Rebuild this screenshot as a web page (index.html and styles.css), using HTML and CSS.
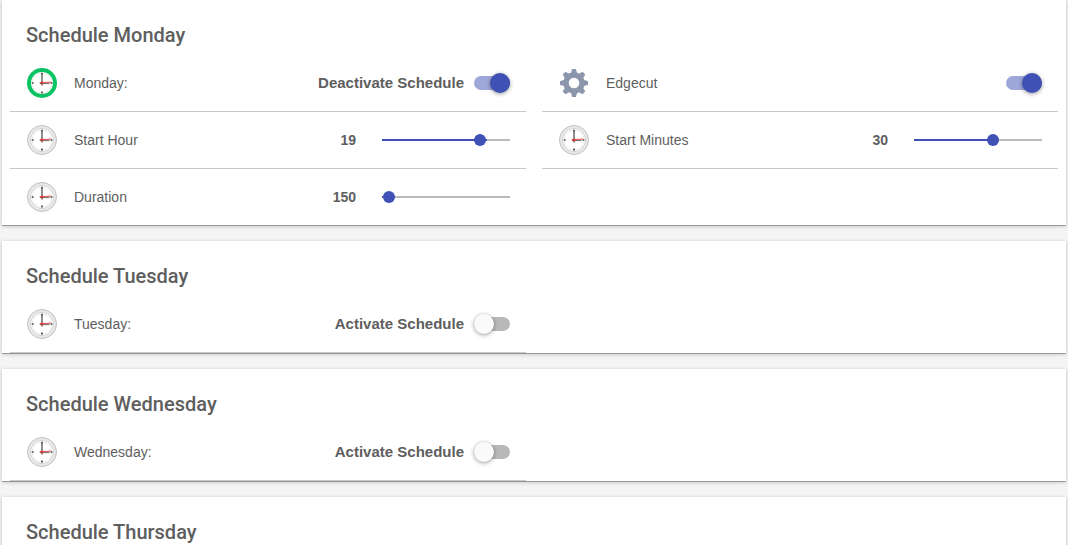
FILE: index.html
```
<!DOCTYPE html>
<html lang="en">
<head>
<meta charset="utf-8">
<title>Schedule</title>
<link rel="stylesheet" href="styles.css">
</head>
<body>
<svg class="defs" aria-hidden="true">
  <symbol id="clock-face" viewBox="0 0 32 32">
    <circle cx="16" cy="16" r="11" fill="#fff"/>
    <circle cx="16" cy="16" r="9.9" fill="none" stroke="#ccc" stroke-width="1" stroke-dasharray=".4 .637"/>
    <path d="M16 5.8v1.8M16 24.6v1.8M5.8 16h1.8M24.6 16h1.8" stroke="#444" stroke-width="1.6"/>
    <path d="M16 6.5v12" stroke="#606060" stroke-width="1.4"/>
    <path d="M14 16.4h9.5" stroke="#777" stroke-width="1.4"/>
    <path d="M13.5 15.8l11.5-.8" stroke="#ea5050" stroke-width="1"/>
    <circle cx="16" cy="16" r="1.4" fill="#d23c3c"/>
  </symbol>
  <symbol id="clock" viewBox="0 0 32 32">
    <circle cx="16" cy="16" r="14.5" fill="#e8e8e8" stroke="#c2c2c2"/>
    <circle cx="16" cy="16" r="11.3" fill="#fff" stroke="#c8c8c8" stroke-width="1"/>
    <use href="#clock-face"/>
  </symbol>
  <symbol id="clock-on" viewBox="0 0 32 32">
    <circle cx="16" cy="16" r="15" fill="#0ac463"/>
    <use href="#clock-face"/>
  </symbol>
  <symbol id="gear" viewBox="0 0 32 32">
    <g fill="#8b96ad">
      <path id="tooth" d="M12.8 7l1.1-4.5q.1-.5.6-.5h3q.5 0 .6.5l1.1 4.5z"/>
      <use href="#tooth" transform="rotate(45 16 16)"/>
      <use href="#tooth" transform="rotate(90 16 16)"/>
      <use href="#tooth" transform="rotate(135 16 16)"/>
      <use href="#tooth" transform="rotate(180 16 16)"/>
      <use href="#tooth" transform="rotate(225 16 16)"/>
      <use href="#tooth" transform="rotate(270 16 16)"/>
      <use href="#tooth" transform="rotate(315 16 16)"/>
    </g>
    <circle cx="16" cy="16" r="8" fill="none" stroke="#8b96ad" stroke-width="5.4"/>
  </symbol>
</svg>
<main class="page">
  <section class="card">
    <h2 class="title">Schedule Monday</h2>
    <div class="columns">
      <div class="column">
        <div class="row">
          <svg class="icon"><use href="#clock-on"/></svg>
          <span class="name">Monday:</span>
          <label class="state" for="mon">Deactivate Schedule</label>
          <input class="switch" type="checkbox" role="switch" id="mon" checked>
        </div>
        <div class="row">
          <svg class="icon"><use href="#clock"/></svg>
          <label class="name" for="hour">Start Hour</label>
          <output class="value" for="hour">19</output>
          <input class="slider" type="range" id="hour" min="0" max="24" value="19" style="--fill:82%">
        </div>
        <div class="row">
          <svg class="icon"><use href="#clock"/></svg>
          <label class="name" for="duration">Duration</label>
          <output class="value" for="duration">150</output>
          <input class="slider" type="range" id="duration" min="145" max="725" value="150" style="--fill:1%">
        </div>
      </div>
      <div class="column">
        <div class="row">
          <svg class="icon"><use href="#gear"/></svg>
          <label class="name" for="edge">Edgecut</label>
          <input class="switch" type="checkbox" role="switch" id="edge" checked>
        </div>
        <div class="row">
          <svg class="icon"><use href="#clock"/></svg>
          <label class="name" for="minutes">Start Minutes</label>
          <output class="value" for="minutes">30</output>
          <input class="slider" type="range" id="minutes" min="0" max="48" value="30" style="--fill:62%">
        </div>
      </div>
    </div>
  </section>
  <section class="card">
    <h2 class="title">Schedule Tuesday</h2>
    <div class="columns">
      <div class="column">
        <div class="row">
          <svg class="icon"><use href="#clock"/></svg>
          <span class="name">Tuesday:</span>
          <label class="state" for="tue">Activate Schedule</label>
          <input class="switch" type="checkbox" role="switch" id="tue">
        </div>
      </div>
    </div>
  </section>
  <section class="card">
    <h2 class="title">Schedule Wednesday</h2>
    <div class="columns">
      <div class="column">
        <div class="row">
          <svg class="icon"><use href="#clock"/></svg>
          <span class="name">Wednesday:</span>
          <label class="state" for="wed">Activate Schedule</label>
          <input class="switch" type="checkbox" role="switch" id="wed">
        </div>
      </div>
    </div>
  </section>
  <section class="card">
    <h2 class="title">Schedule Thursday</h2>
  </section>
</main>
</body>
</html>
```
FILE: styles.css
```
* { box-sizing: border-box; }
html { scrollbar-width: none; }
body {
  margin: 0;
  background: #f4f4f4;
  color: #5e5e5e;
  font: 14px/20px "Liberation Sans", Arial, sans-serif;
}
.defs { display: none; }
.page {
  display: flex;
  flex-direction: column;
  gap: 16px;
  padding: 0 2px;
}
.card {
  padding: 0 8px;
  background: #fff;
  box-shadow: 0 1px 0 rgba(0, 0, 0, .28), 0 1px 4px rgba(0, 0, 0, .24);
}
.title {
  margin: 0;
  padding: 20px 16px 5px;
  font: 500 20px/30px Roboto, sans-serif;
}
.columns {
  display: grid;
  grid-template-columns: 1fr 1fr;
  gap: 16px;
}
.row {
  display: flex;
  align-items: center;
  min-height: 57px;
  padding: 0 16px;
  border-bottom: 1px solid #c8c8c8;
}
.row:nth-child(3) {
  min-height: 56px;
  border-bottom: 0;
}
.icon {
  flex: none;
  width: 32px;
  height: 32px;
  margin-right: 16px;
}
.name { flex: 1; }
.state {
  margin-right: 10px;
  font-size: 15px;
  font-weight: bold;
}
.value {
  margin-right: 26px;
  font-weight: bold;
}
.switch {
  appearance: none;
  display: flex;
  align-items: center;
  flex: none;
  width: 36px;
  height: 14px;
  margin: 0;
  border-radius: 7px;
  background: #b9b9b9;
}
.switch::before {
  content: "";
  flex: none;
  width: 20px;
  height: 20px;
  border-radius: 50%;
  background: #fafafa;
  box-shadow: 0 1px 4px rgba(0, 0, 0, .4);
}
.switch:checked {
  justify-content: flex-end;
  background: #9fa8da;
}
.switch:checked::before { background: #3f51b5; }
.slider {
  appearance: none;
  flex: none;
  width: 128px;
  height: 12px;
  margin: 0;
  background: linear-gradient(#3f51b5, #3f51b5) 0 50% / var(--fill) 2px no-repeat,
    linear-gradient(#bababa, #bababa) 0 50% / 100% 2px no-repeat;
}
.slider::-webkit-slider-thumb {
  appearance: none;
  width: 12px;
  height: 12px;
  border-radius: 50%;
  background: #3f51b5;
}
```
